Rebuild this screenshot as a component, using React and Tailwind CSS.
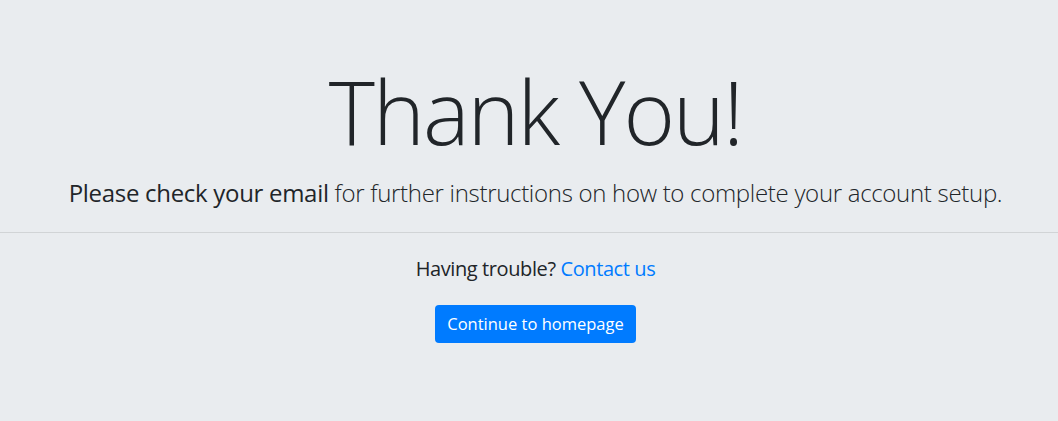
import React from 'react';

const App = () => {
  return (
    <div className="min-h-screen bg-[#e9ecef] text-[#212529] font-['Open_Sans',sans-serif]">
      <div className="pt-[59px] pl-[13px] text-center">
        <h1 className="text-[88px] font-light leading-[1.2] tracking-[-2px]">Thank You!</h1>
        <p className="mt-[10px] text-[24px] leading-[36px] font-light tracking-[-0.3px]">
          <span className="font-normal">Please check your email</span> for further instructions on how to complete your account setup.
        </p>
      </div>
      <hr className="mt-[21px] border-0 border-t border-black/10" />
      <div className="pt-[21px] pl-[13px] text-center">
        <p className="text-[20px] leading-[30px] tracking-[-0.4px]">
          Having trouble? <a href="#" className="text-[#007bff]">Contact us</a>
        </p>
        <button type="button" className="mt-[21px] bg-[#007bff] text-white text-[16.5px] leading-[24px] px-3 py-[7px] rounded">Continue to homepage</button>
      </div>
    </div>
  );
};

export default App;
